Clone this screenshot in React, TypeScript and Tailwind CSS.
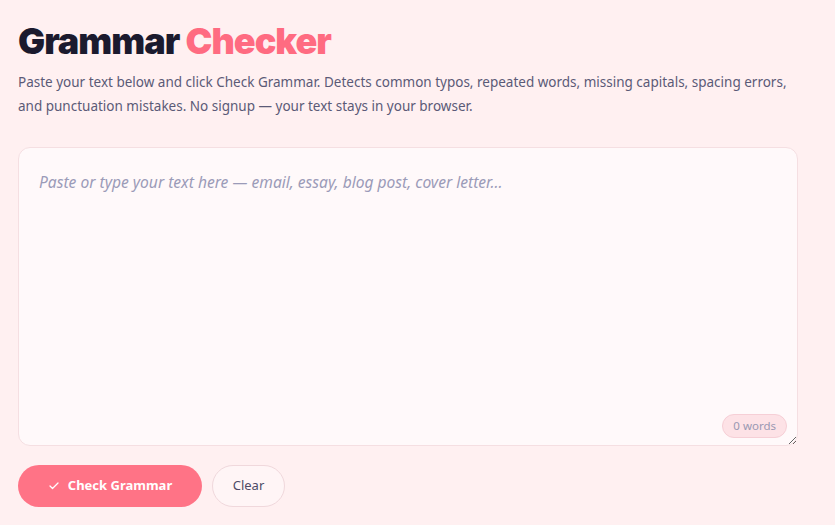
import { useState } from "react";

function App() {
  const [text, setText] = useState("");

  const words = text.trim() ? text.trim().split(/\s+/).length : 0;

  return (
    <div className="min-h-screen w-full bg-[#fff0f1] font-['Noto_Sans',sans-serif]">
      <div className="px-[18px] pt-[18px] max-w-[816px]">
        {/* Title */}
        <h1 className="font-['Inter',sans-serif] font-black text-[36px] leading-[46px] tracking-[-1px] text-[#1b1a2e]">
          Grammar <span className="text-[#ff6b81]">Checker</span>
        </h1>
        <p className="mt-[6px] text-[13.5px] leading-[24px] text-[#5b5a77]">
          Paste your text below and click Check Grammar. Detects common typos, repeated words, missing capitals, spacing errors,
          and punctuation mistakes. No signup — your text stays in your browser.
        </p>

        {/* Editor */}
        <div className="relative mt-[29px] w-[780px]">
          <textarea
            value={text}
            onChange={(e) => setText(e.target.value)}
            placeholder="Paste or type your text here — email, essay, blog post, cover letter..."
            className="block w-full h-[299px] resize-y rounded-[12px] border border-[#f5dfe2] bg-[#fff9fa] px-[20px] py-[22px] text-[15.6px] leading-[24px] text-[#2a2940] italic placeholder:text-[#9b9bb8] outline-none"
          />
          <span className="absolute right-[11px] bottom-[8px] rounded-full border border-[#f6cfd6] bg-[#fde2e6] px-[10px] py-[3px] text-[11.5px] leading-[16px] text-[#9a98b2]">
            {words} words
          </span>
        </div>

        {/* Actions */}
        <div className="mt-[19px] flex items-center gap-[10px]">
          <button
            type="button"
            className="flex h-[42px] w-[184px] items-center justify-center gap-[8px] rounded-full bg-[#ff7386] text-[13px] font-bold text-white"
          >
            <svg className="h-[12px] w-[12px]" viewBox="0 0 24 24" fill="none" stroke="currentColor" strokeWidth={2.5} strokeLinecap="round" strokeLinejoin="round">
              <path d="M20 6 9 17l-5-5" />
            </svg>
            Check Grammar
          </button>
          <button
            type="button"
            onClick={() => setText("")}
            className="h-[42px] w-[73px] rounded-full border border-[#f0d8dc] bg-[#fff5f6] text-[13px] text-[#4d4b66]"
          >
            Clear
          </button>
        </div>
      </div>
    </div>
  );
}

export default App;
